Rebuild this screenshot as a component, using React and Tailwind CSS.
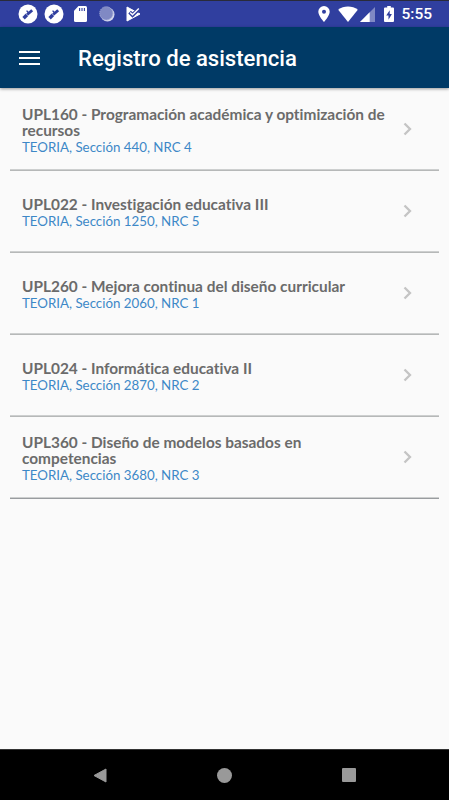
import React from 'react';

const COURSES = [
  { id: 'UPL160', name: 'Programación académica y optimización de recursos', section: 440, nrc: 4 },
  { id: 'UPL022', name: 'Investigación educativa III', section: 1250, nrc: 5 },
  { id: 'UPL260', name: 'Mejora continua del diseño curricular', section: 2060, nrc: 1 },
  { id: 'UPL024', name: 'Informática educativa II', section: 2870, nrc: 2 },
  { id: 'UPL360', name: 'Diseño de modelos basados en competencias', section: 3680, nrc: 3 },
];

const ToolBadge = () => (
  <svg className="w-5 h-5" viewBox="0 0 20 20">
    <circle cx="10" cy="10" r="9.5" fill="#fff" />
    <g stroke="#303f9f" fill="none">
      <path d="M5.6 14.2 9 10.8" strokeWidth="3.4" />
      <path d="M9 10.8 14.2 6.2" strokeWidth="2.8" />
      <path d="M8.6 6.6 10.8 9" strokeWidth="1.4" />
    </g>
    <path d="M7.8 9.4 10.4 12" stroke="#fff" strokeWidth=".4" />
  </svg>
);

const StatusBar = () => (
  <div className="h-[27px] shrink-0 flex items-center justify-between border-t border-[#292b3b] bg-[#303f9f] pl-[18px] pr-[17px]">
    <div className="flex items-center">
      <ToolBadge />
      <div className="ml-[6px]"><ToolBadge /></div>
      <svg className="w-[13px] h-[16px] ml-[10px]" viewBox="0 0 13 16">
        <path d="M4.5 0H11.5Q13 0 13 1.5V14.5Q13 16 11.5 16H1.5Q0 16 0 14.5V4.7Z" fill="#fff" />
        <path d="M5.6 2V5M8 2V5M10.4 2V5" stroke="#303f9f" strokeWidth="1.1" />
      </svg>
      <svg className="w-4 h-4 ml-[12px]" viewBox="0 0 16 16">
        <circle cx="8.5" cy="8.5" r="7" fill="#d3d7ed" />
        <circle cx="7.3" cy="7.3" r="6.6" fill="#8089c4" stroke="#a3aad6" strokeWidth="1" strokeDasharray="1.2 .8" />
      </svg>
      <svg className="w-[15px] h-[16px] ml-[11px]" viewBox="0 0 15 16">
        <path d="M1 1 14 8 1 15Z" fill="#fff" stroke="#fff" strokeLinejoin="round" />
        <path d="M3.6 6.2 6.5 9 14.5 1.4" fill="none" stroke="#303f9f" strokeWidth="3.8" />
        <path d="M4.2 6.4 6.5 8.7 12.8 2.6" fill="none" stroke="#fff" strokeWidth="1.4" />
      </svg>
    </div>
    <div className="flex items-center">
      <svg className="w-[12px] h-[16px]" viewBox="0 0 12 16">
        <path fillRule="evenodd" d="M6 0A5.7 5.7 0 0 0 .3 5.7C.3 9.8 6 16 6 16S11.7 9.8 11.7 5.7A5.7 5.7 0 0 0 6 0ZM6 3.7A2 2 0 1 1 6 7.7 2 2 0 0 1 6 3.7Z" fill="#fff" />
      </svg>
      <svg className="w-[20px] h-[16px] ml-[8px]" viewBox="0 0 20 16">
        <path d="M10 16 .2 3.8C3 1.4 6.3.4 10 .4S17 1.4 19.8 3.8Z" fill="#fff" />
      </svg>
      <svg className="w-[15px] h-[15px] ml-[2px]" viewBox="0 0 15 15">
        <path d="M15 0V15H0Z" fill="#8089c4" />
        <path d="M9.7 5.3V15H0Z" fill="#fff" />
      </svg>
      <svg className="w-[10px] h-[16px] ml-[9px]" viewBox="0 0 10 16">
        <path d="M3.2 0H6.8V1.6H9Q10 1.6 10 2.6V15Q10 16 9 16H1Q0 16 0 15V2.6Q0 1.6 1 1.6H3.2Z" fill="#fff" />
        <path d="M5.7 4.2 2.2 9.6H4.5V13.8L7.9 8H5.7Z" fill="#303f9f" />
      </svg>
      <span className="ml-[7px] pt-[2px] text-[15.5px] leading-none font-medium text-white">5:55</span>
    </div>
  </div>
);

const CourseRow = ({ course }) => (
  <li className="h-[82px] flex items-center border-b border-[#b6b8b8] last:border-[#999c9f] shadow-[inset_0_-1px_0_#cdcfcf] pl-3 pr-[27px]">
    <div className="flex-1 pt-[3px] pr-[16px]">
      <h2 className="text-[15.4px] leading-[16px] font-bold text-[#6b6b6b]">
        {course.id} - {course.name}
      </h2>
      <p className="text-[13.3px] leading-[18px] text-[#3d88c7]">
        TEORIA, Sección {course.section}, NRC {course.nrc}
      </p>
    </div>
    <svg className="w-[9px] h-[14px] mb-px shrink-0" viewBox="0 0 9 14">
      <path d="M1.5 1.5 7 7 1.5 12.5" fill="none" stroke="#c4c4c4" strokeWidth="2.3" />
    </svg>
  </li>
);

export default function App() {
  return (
    <div className="h-screen w-full flex flex-col overflow-hidden bg-[#fafafa] font-[Roboto,sans-serif]">
      <StatusBar />

      {/* HEADER */}
      <header className="h-[61px] shrink-0 flex items-center bg-[#003a66] pl-[19px] shadow-[0_1px_3px_rgba(0,0,0,0.4)] relative z-10">
        <button className="flex flex-col gap-[4px]" aria-label="Menú">
          <span className="w-[21px] h-[2px] bg-white" />
          <span className="w-[21px] h-[2px] bg-white" />
          <span className="w-[21px] h-[2px] bg-white" />
        </button>
        <h1 className="ml-[38px] pt-[2px] text-[22.1px] font-medium text-white">Registro de asistencia</h1>
      </header>

      {/* COURSE LIST */}
      <ul className="flex-1 pt-px px-[10px] font-[Lato,sans-serif] [font-variant-ligatures:none]">
        {COURSES.map(course => <CourseRow key={course.id} course={course} />)}
      </ul>

      {/* NAVIGATION BAR */}
      <nav className="h-[51px] shrink-0 flex items-center justify-between border-t border-[#333] bg-black pl-[93px] pr-[93px]">
        <svg className="w-[14px] h-[15px]" viewBox="0 0 14 15">
          <path d="M13 1V14L1 7.5Z" fill="#999" stroke="#999" strokeLinejoin="round" />
        </svg>
        <div className="size-[15px] rounded-full bg-[#999]" />
        <div className="size-[14px] rounded-[1px] bg-[#999]" />
      </nav>
    </div>
  );
}
